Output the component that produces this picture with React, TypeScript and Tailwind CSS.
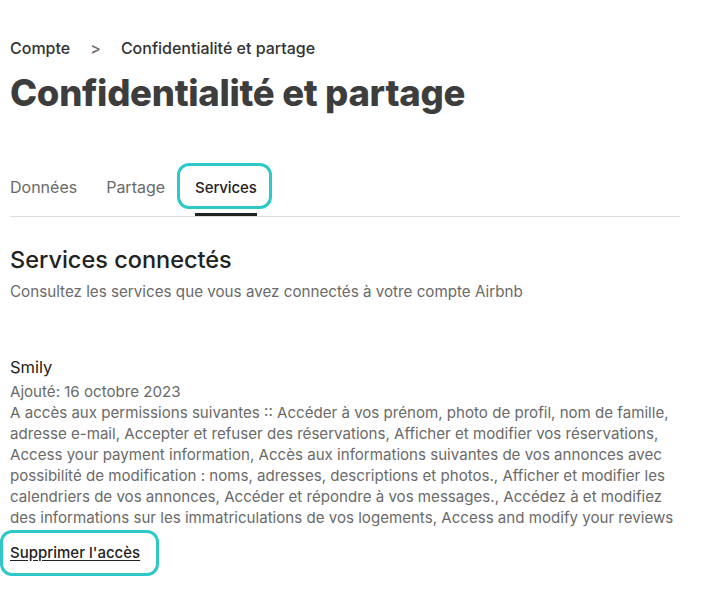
const PERMISSION_LINES = [
  "A accès aux permissions suivantes :: Accéder à vos prénom, photo de profil, nom de famille,",
  "adresse e-mail, Accepter et refuser des réservations, Afficher et modifier vos réservations,",
  "Access your payment information, Accès aux informations suivantes de vos annonces avec",
  "possibilité de modification : noms, adresses, descriptions et photos., Afficher et modifier les",
  "calendriers de vos annonces, Accéder et répondre à vos messages., Accédez à et modifiez",
  "des informations sur les immatriculations de vos logements, Access and modify your reviews",
];

export default function App() {
  return (
    <div
      className="min-h-[606px] w-[721px] bg-white pl-[10px] text-[#222222]"
      style={{ fontFamily: "Inter, 'Noto Sans', sans-serif" }}
    >
      {/* Breadcrumb */}
      <div className="flex items-center pt-[37px] text-[16px] font-medium leading-[22px] text-[#333333]">
        <span>Compte</span>
        <span className="mx-[20px] text-[#6a6a6a]">&gt;</span>
        <span>Confidentialité et partage</span>
      </div>

      <h1 className="mt-[12px] text-[36.5px] font-extrabold leading-[44px] tracking-[-0.3px] text-[#3d3d3d]">
        Confidentialité et partage
      </h1>

      {/* Tabs */}
      <div className="mt-[60px] flex w-[670px] items-end border-b border-[#dddddd] text-[16px]">
        <div className="mr-[29px] pb-[17px] text-[#6a6a6a]">Données</div>
        <div className="mr-[30px] pb-[17px] text-[#6a6a6a]">Partage</div>
        <div className="relative border-b-[3px] border-[#222222] pb-[14px] text-[15px] font-medium tracking-[-0.1px] text-[#222222]">
          Services
          <div className="absolute -left-[18px] -top-[14px] h-[46px] w-[95px] rounded-[12px] border-[3px] border-[#2ec8c8]" />
        </div>
      </div>

      {/* Section */}
      <h2 className="mt-[27px] text-[23.5px] font-medium leading-[32px] text-[#222222]">
        Services connectés
      </h2>
      <p className="mt-[5px] text-[15.2px] leading-[21px] text-[#6a6a6a]">
        Consultez les services que vous avez connectés à votre compte Airbnb
      </p>

      <div className="mt-[54px] w-[700px]">
        <div className="text-[16.5px] leading-[22px] text-[#222222]">Smily</div>
        <div className="mt-[3px] whitespace-nowrap text-[15.1px] leading-[21px] text-[#6a6a6a]">
          <div>Ajouté: 16 octobre 2023</div>
          {PERMISSION_LINES.map((line) => (
            <div key={line}>{line}</div>
          ))}
        </div>
        <div className="relative mt-[14px] inline-block text-[15px] font-medium leading-[22px] text-[#222222] underline underline-offset-2">
          Supprimer l'accès
          <div className="absolute -left-[10px] -top-[12px] h-[46px] w-[159px] rounded-[12px] border-[3px] border-[#2ec8c8]" />
        </div>
      </div>
    </div>
  );
}
